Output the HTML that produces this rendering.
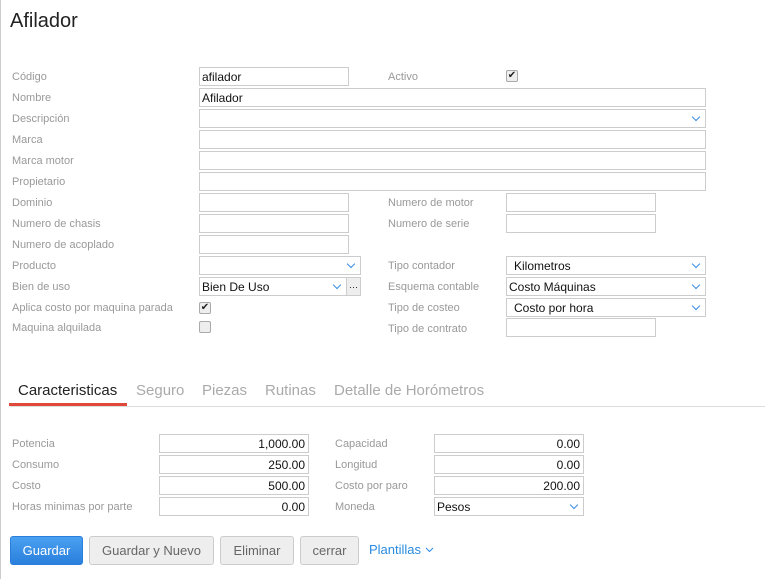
<!DOCTYPE html>
<html><head><meta charset="utf-8"><style>
*{box-sizing:border-box;margin:0;padding:0}
body{width:765px;height:579px;background:#fff;font-family:"Liberation Sans",sans-serif;position:relative;overflow:hidden}
body::before{content:"";position:absolute;left:0;top:0;width:1px;height:579px;background:#ccc}
.a{position:absolute}
.l{position:absolute;font-size:11px;color:#999;line-height:19px;margin-top:2px}
.i{position:absolute;height:19px;border:1px solid #ccc;background:#fff;font-size:12px;color:#111;line-height:19px;padding:0 2px}
.r{text-align:right;padding-right:3px}
.s::after{content:"";position:absolute;right:6px;top:4px;width:5px;height:5px;border-right:1px solid #3a8ee6;border-bottom:1px solid #3a8ee6;transform:rotate(45deg)}
.cb{position:absolute;width:12px;height:12px;border:1px solid #aaa;border-radius:2px;background:#eee;font-size:10px;line-height:10px;text-align:center;color:#222}
.t{position:absolute;top:382px;font-size:15px;color:#aaa;line-height:18px}
.b{position:absolute;top:536px;height:29px;border:1px solid #ccc;border-radius:3px;background:#eee;color:#666;font-size:13px;line-height:27px;text-align:center}
</style></head><body>
<div class="a" style="left:10px;top:10px;font-size:20px;color:#222">Afilador</div>

<div class="l" style="left:12px;top:66px">Código</div><div class="i" style="left:199px;top:67px;width:150px">afilador</div>
<div class="l" style="left:388px;top:66px">Activo</div><div class="cb" style="left:506px;top:70px">✔</div>
<div class="l" style="left:12px;top:87px">Nombre</div><div class="i" style="left:199px;top:88px;width:507px">Afilador</div>
<div class="l" style="left:12px;top:108px">Descripción</div><div class="i s" style="left:199px;top:109px;width:507px"></div>
<div class="l" style="left:12px;top:129px">Marca</div><div class="i" style="left:199px;top:130px;width:507px"></div>
<div class="l" style="left:12px;top:150px">Marca motor</div><div class="i" style="left:199px;top:151px;width:507px"></div>
<div class="l" style="left:12px;top:171px">Propietario</div><div class="i" style="left:199px;top:172px;width:507px"></div>
<div class="l" style="left:12px;top:192px">Dominio</div><div class="i" style="left:199px;top:193px;width:150px"></div>
<div class="l" style="left:388px;top:192px">Numero de motor</div><div class="i" style="left:506px;top:193px;width:150px"></div>
<div class="l" style="left:12px;top:213px">Numero de chasis</div><div class="i" style="left:199px;top:214px;width:150px"></div>
<div class="l" style="left:388px;top:213px">Numero de serie</div><div class="i" style="left:506px;top:214px;width:150px"></div>
<div class="l" style="left:12px;top:234px">Numero de acoplado</div><div class="i" style="left:199px;top:235px;width:150px"></div>
<div class="l" style="left:12px;top:255px">Producto</div><div class="i s" style="left:199px;top:256px;width:162px"></div>
<div class="l" style="left:388px;top:255px">Tipo contador</div><div class="i s" style="left:506px;top:256px;width:200px;padding-left:7px">Kilometros</div>
<div class="l" style="left:12px;top:276px">Bien de uso</div><div class="i s" style="left:199px;top:277px;width:148px">Bien De Uso</div>
<div class="i" style="left:346px;top:277px;width:15px;background:#eee;font-size:9px;text-align:center;padding:0">···</div>
<div class="l" style="left:388px;top:276px">Esquema contable</div><div class="i s" style="left:506px;top:277px;width:200px">Costo Máquinas</div>
<div class="l" style="left:12px;top:297px">Aplica costo por maquina parada</div><div class="cb" style="left:199px;top:302px">✔</div>
<div class="l" style="left:388px;top:297px">Tipo de costeo</div><div class="i s" style="left:506px;top:298px;width:200px;padding-left:7px">Costo por hora</div>
<div class="l" style="left:12px;top:317px">Maquina alquilada</div><div class="cb" style="left:199px;top:321px"></div>
<div class="l" style="left:388px;top:318px">Tipo de contrato</div><div class="i" style="left:506px;top:318px;width:150px"></div>

<div class="t" style="left:18px;color:#222">Caracteristicas</div>
<div class="t" style="left:136px">Seguro</div>
<div class="t" style="left:202px">Piezas</div>
<div class="t" style="left:265px">Rutinas</div>
<div class="t" style="left:334px">Detalle de Horómetros</div>
<div class="a" style="left:10px;top:406px;width:755px;height:1px;background:#ddd"></div>
<div class="a" style="left:9px;top:403px;width:118px;height:3px;background:#e0483a"></div>

<div class="l" style="left:12px;top:433px">Potencia</div><div class="i r" style="left:159px;top:434px;width:150px">1,000.00</div>
<div class="l" style="left:335px;top:433px">Capacidad</div><div class="i r" style="left:434px;top:434px;width:150px">0.00</div>
<div class="l" style="left:12px;top:454px">Consumo</div><div class="i r" style="left:159px;top:455px;width:150px">250.00</div>
<div class="l" style="left:335px;top:454px">Longitud</div><div class="i r" style="left:434px;top:455px;width:150px">0.00</div>
<div class="l" style="left:12px;top:475px">Costo</div><div class="i r" style="left:159px;top:476px;width:150px">500.00</div>
<div class="l" style="left:335px;top:475px">Costo por paro</div><div class="i r" style="left:434px;top:476px;width:150px">200.00</div>
<div class="l" style="left:12px;top:496px">Horas minimas por parte</div><div class="i r" style="left:159px;top:497px;width:150px">0.00</div>
<div class="l" style="left:335px;top:496px">Moneda</div><div class="i s" style="left:434px;top:497px;width:150px">Pesos</div>

<div class="b" style="left:10px;width:73px;background:linear-gradient(#4aa0f0,#2a7fdc);border-color:#2a7fdc;color:#fff">Guardar</div>
<div class="b" style="left:89px;width:125px">Guardar y Nuevo</div>
<div class="b" style="left:220px;width:74px">Eliminar</div>
<div class="b" style="left:300px;width:59px">cerrar</div>
<div class="a" style="left:369px;top:542px;font-size:13px;color:#2a8be0">Plantillas</div>
<svg class="a" style="left:425px;top:547px" width="9" height="6"><path d="M1 1L4.5 4.5L8 1" fill="none" stroke="#2a8be0" stroke-width="1"/></svg>
</body></html>
